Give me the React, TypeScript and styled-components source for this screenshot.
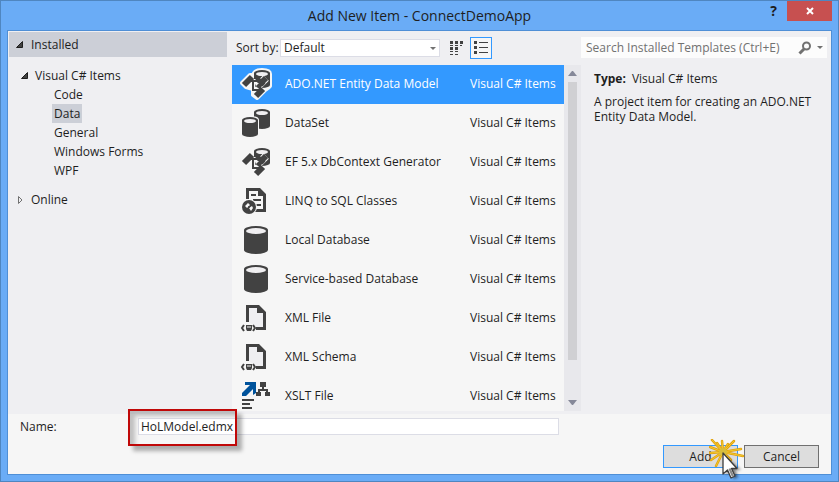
import React, { useState } from "react";
import styled, { createGlobalStyle, css } from "styled-components";

const GlobalStyle = createGlobalStyle`
  * { box-sizing: border-box; }
  body { margin: 0; }
  body, button, input, select {
    font-family: "Open Sans", "Noto Sans", sans-serif;
    font-size: 12px;
    line-height: 16px;
    color: #1e1e1e;
  }
  button { cursor: default; }
  svg { display: block; flex: none; }
`;

const Window = styled.div`
  display: flex;
  flex-direction: column;
  height: 100vh;
  min-height: 400px;
  padding: 0 6px 6px;
  background: #6aacf6;
  border: 1px solid #4f86c0;
`;

const TitleBar = styled.header`
  display: grid;
  grid-template-columns: 72px 1fr 72px;
  flex: none;
  height: 29px;
`;

const Title = styled.h1`
  grid-column: 2;
  margin: 0;
  font-size: 14px;
  font-weight: 400;
  line-height: 29px;
  text-align: center;
  white-space: nowrap;
`;

const WindowButtons = styled.div`
  display: flex;
  justify-content: flex-end;
  align-items: flex-start;
`;

const HelpButton = styled.button`
  width: 27px;
  height: 20px;
  padding: 0;
  border: 0;
  background: none;
  font-size: 14px;
  font-weight: 700;
`;

const CloseButton = styled.button`
  display: grid;
  place-items: center;
  width: 45px;
  height: 20px;
  padding: 0;
  border: 0;
  background: #c75050;
`;

const Client = styled.div`
  display: flex;
  flex: 1;
  flex-direction: column;
  min-height: 0;
  border: 1px solid #4f8fd6;
  background: #efeff2;
`;

const Body = styled.main`
  display: grid;
  grid-template-columns: 218px minmax(0, 1fr) 246px;
  flex: 1;
  min-height: 0;
  padding: 1px 4px 3px 1px;
`;

const Sidebar = styled.nav`
  display: flex;
  flex-direction: column;
  align-items: flex-start;
`;

const GroupButton = styled.button<{ $active?: boolean }>`
  display: flex;
  align-items: center;
  gap: 7px;
  width: 100%;
  height: 25px;
  padding: 0 7px;
  border: 0;
  background: ${(p) => (p.$active ? "#cccfd7" : "transparent")};
`;

const Tree = styled.div`
  display: flex;
  flex-direction: column;
  align-items: flex-start;
  padding: 9px 0 7px 12px;
`;

const BranchButton = styled.button`
  display: flex;
  align-items: center;
  gap: 6px;
  height: 19px;
  padding: 0;
  border: 0;
  background: none;
`;

const Leaves = styled.div`
  display: flex;
  flex-direction: column;
  align-items: flex-start;
  padding-left: 31px;
`;

const LeafButton = styled.button<{ $selected: boolean }>`
  height: 19px;
  padding: 0 2px;
  border: 0;
  background: ${(p) => (p.$selected ? "#cccfd7" : "transparent")};
`;

const Center = styled.section`
  display: flex;
  flex-direction: column;
  min-width: 0;
  min-height: 0;
  padding-left: 5px;
`;

const Toolbar = styled.div`
  display: flex;
  flex: none;
  align-items: center;
  height: 33px;
  padding: 0 0 1px 4px;
`;

const SortLabel = styled.label`
  flex: none;
  width: 44px;
  white-space: nowrap;
`;

const SelectBox = styled.div`
  display: grid;
  flex: none;
  align-items: center;
  width: 160px;
  height: 18px;
  border: 1px solid #dcdde6;
  background: #fff;

  & > * { grid-area: 1 / 1; }
  & > svg { justify-self: end; margin-right: 3px; pointer-events: none; }
`;

const SortSelect = styled.select`
  appearance: none;
  width: 100%;
  height: 16px;
  padding: 0 16px 0 3px;
  border: 0;
  background: none;
`;

const ViewButton = styled.button<{ $active?: boolean }>`
  display: grid;
  place-items: center;
  width: 22px;
  height: 22px;
  padding: 0;
  border: 1px solid ${(p) => (p.$active ? "#3399ff" : "transparent")};
  background: ${(p) => (p.$active ? "#f6f6f6" : "transparent")};
`;

const ViewButtons = styled.div`
  display: flex;
  gap: 3px;
  margin-left: 5px;
`;

const ListArea = styled.div`
  display: flex;
  flex: 1;
  min-height: 0;
`;

const TemplateList = styled.div`
  flex: 1;
  min-width: 0;
  overflow: hidden;
  background: #f6f6f6;
`;

const TemplateRow = styled.button<{ $selected: boolean }>`
  display: grid;
  grid-template-columns: 32px 1fr 81px;
  column-gap: 13px;
  align-items: center;
  width: 100%;
  height: 39px;
  padding: 0 13px 1px 8px;
  border: 0;
  background: none;
  text-align: left;
  white-space: nowrap;
  ${(p) =>
    p.$selected &&
    css`
      background: #3399ff;
      color: #fff;
    `}
`;

const ScrollBar = styled.div`
  display: flex;
  flex: none;
  flex-direction: column;
  align-items: center;
  width: 17px;
  background: #e8e8ec;
`;

const ScrollButton = styled.button`
  display: grid;
  place-items: center;
  width: 17px;
  height: 17px;
  padding: 0;
  border: 0;
  background: none;
`;

const ScrollTrack = styled.div`
  flex: 1;
  width: 9px;
`;

const ScrollThumb = styled.div`
  height: 89%;
  background: #d0d0d3;
`;

const Details = styled.aside`
  min-width: 0;
`;

const SearchBox = styled.div`
  display: flex;
  align-items: center;
  height: 21px;
  margin-top: 5px;
  background: #fcfcfc;
`;

const SearchInput = styled.input`
  flex: 1;
  min-width: 0;
  height: 21px;
  padding: 0 5px;
  border: 0;
  outline: 0;
  background: none;
  &::placeholder { color: #717171; opacity: 1; }
`;

const SearchButton = styled.button<{ $narrow?: boolean }>`
  display: grid;
  place-items: center;
  width: ${(p) => (p.$narrow ? "14px" : "16px")};
  height: 21px;
  padding: 0;
  border: 0;
  background: none;
`;

const Info = styled.div`
  display: flex;
  flex-direction: column;
  gap: 8px;
  padding: 13px 8px 0 13px;
`;

const InfoText = styled.p`
  margin: 0;
  line-height: 15px;
`;

const InfoLabel = styled.strong`
  margin-right: 6px;
`;

const Footer = styled.footer`
  display: flex;
  flex: none;
  flex-direction: column;
  justify-content: space-between;
  height: 60px;
  padding: 4px 12px 6px;
  background: #f6f6f6;
`;

const NameRow = styled.div`
  display: flex;
  align-items: center;
`;

const NameLabel = styled.label`
  width: 118px;
`;

const NameField = styled.div`
  position: relative;
  flex: 0 1 421px;
`;

const NameInput = styled.input`
  display: block;
  width: 100%;
  height: 17px;
  padding: 0 2px;
  border: 1px solid #dcdde6;
  outline: 0;
  background: #fff;
`;

const Callout = styled.div`
  position: absolute;
  top: -9px;
  left: -10px;
  width: 109px;
  height: 37px;
  border: 2px solid #c00808;
  box-shadow: 5px 5px 4px rgba(0, 0, 0, 0.3), inset 5px 5px 4px rgba(0, 0, 0, 0.22);
  pointer-events: none;
`;

const Actions = styled.div`
  display: flex;
  justify-content: flex-end;
  gap: 6px;
`;

const ActionSlot = styled.div`
  position: relative;
`;

const ActionButton = styled.button<{ $primary?: boolean }>`
  display: block;
  width: 75px;
  height: 23px;
  padding: 0;
  border: 1px solid ${(p) => (p.$primary ? "#3399ff" : "#707070")};
  background: #dddddd;
`;

const Pointer = styled.svg`
  position: absolute;
  top: -6px;
  left: 46px;
  pointer-events: none;
`;

const INK = "#424242";

function Cylinder({ x, y, w, h }: { x: number; y: number; w: number; h: number }) {
  const r = w / 2;
  const ry = w > 20 ? 4 : 3;
  return (
    <g>
      <path
        d={`M${x} ${y + ry}A${r} ${ry} 0 0 1 ${x + w} ${y + ry}V${y + h - ry}A${r} ${ry} 0 0 1 ${x} ${y + h - ry}Z`}
        fill={INK}
      />
      <ellipse cx={x + r} cy={y + ry + 1} rx={r - 2} ry={ry - 1} fill="#f0eff1" />
    </g>
  );
}

function ModelIcon({ halo }: { halo?: boolean }) {
  const blocks = "M4 17L12 9M17 19L26 10M16 28L23 21";
  const links = "M10 13H20M13 13V22H21";
  return (
    <svg width="32" height="32" viewBox="0 0 32 32">
      {halo && (
        <path
          d="M10 7H14V5Q16 2 22 2Q30 2 30 6V18L28 20L24 23L17 30L13 27V21L6 19L2 15Z"
          fill="#f6f6f6"
          stroke="#f6f6f6"
          strokeWidth="4"
          strokeLinejoin="round"
        />
      )}
      <Cylinder x={14} y={2} w={16} h={18} />
      <path d={blocks} stroke="#f6f6f6" strokeWidth="8" />
      <path d={links} fill="none" stroke="#f6f6f6" strokeWidth="4" />
      <path d={blocks} stroke={INK} strokeWidth="6" />
      <path d="M16 9L24 17" stroke={INK} strokeWidth="4" />
      <path d={links} fill="none" stroke={INK} strokeWidth="2" />
      <path d="M15 15H19L16 18" fill="#f6f6f6" />
    </svg>
  );
}

function DataSetIcon() {
  return (
    <svg width="32" height="32" viewBox="0 0 32 32">
      <Cylinder x={14} y={2} w={16} h={20} />
      <path d="M1 13Q1 9 10 9Q19 9 19 13V31H1Z" fill="#f6f6f6" />
      <Cylinder x={2} y={10} w={16} h={20} />
    </svg>
  );
}

function DatabaseIcon() {
  return (
    <svg width="32" height="32" viewBox="0 0 32 32">
      <Cylinder x={4} y={2} w={24} h={28} />
    </svg>
  );
}

function LinqIcon() {
  return (
    <svg width="32" height="32" viewBox="0 0 32 32">
      <path d="M6 3H20L26 9V27H15V24H23V11H18V6H9V14H6Z" fill={INK} />
      <path d="M11 10H16M13 15H21M16 20H21" stroke={INK} strokeWidth="2" />
      <circle cx="9" cy="22" r="8" fill="#f6f6f6" />
      <circle cx="9" cy="22" r="7" fill={INK} />
      <path d="M5 21L8 18L10 20L7 23ZM9 23L12 21L13 23L11 26Z" fill="#f6f6f6" />
      <circle cx="9" cy="22" r="1" fill={INK} />
    </svg>
  );
}

function XmlIcon() {
  return (
    <svg width="32" height="32" viewBox="0 0 32 32">
      <path d="M6 3H19L26 10V28H16V25H23V11H17V6H9V20H6Z" fill={INK} />
      <path d="M9 6H17V11H23V25H16L9 20Z" fill="#efeff2" />
      <path d="M4 23L2 26L4 29M13 23L15 26L13 29" fill="none" stroke={INK} strokeWidth="2" />
      <path d="M6 23H12V27L11 29H7L6 27Z" fill={INK} />
      <path d="M7 25H11" stroke="#f6f6f6" strokeWidth="1" />
    </svg>
  );
}

function XsltIcon() {
  return (
    <svg width="32" height="32" viewBox="0 0 32 32">
      <path d="M5 2H16V13L13 15V9L6 16H2V13L10 5H5Z" fill="#00539c" />
      <path d="M20 2H26V7H24V9H28V12H30V16H25V12H26V11H20V12H21V16H16V12H18V9H22V7H20Z" fill={INK} />
      <path d="M2 20H14M2 24H10M2 28H12" stroke={INK} strokeWidth="2" />
    </svg>
  );
}

function Arrow({ color, up }: { color: string; up?: boolean }) {
  return (
    <svg width="9" height="5" viewBox="0 0 9 5">
      <path d={up ? "M0 5H9L5 0H4Z" : "M0 0H9L5 5H4Z"} fill={color} />
    </svg>
  );
}

function DropArrow() {
  return (
    <svg width="6" height="3" viewBox="0 0 6 3">
      <path d="M0 0H6L3 3Z" fill="#717171" />
    </svg>
  );
}

function Expander({ open }: { open?: boolean }) {
  return (
    <svg width="8" height="10" viewBox="0 0 8 10">
      {open ? (
        <path d="M6.5 1.5V7.5H0.5Z" fill={INK} stroke="#1e1e1e" />
      ) : (
        <path d="M2.5 1.5V8.5L6 5Z" fill="none" stroke="#717171" />
      )}
    </svg>
  );
}

const templates = [
  { name: "ADO.NET Entity Data Model", icon: <ModelIcon halo /> },
  { name: "DataSet", icon: <DataSetIcon /> },
  { name: "EF 5.x DbContext Generator", icon: <ModelIcon /> },
  { name: "LINQ to SQL Classes", icon: <LinqIcon /> },
  { name: "Local Database", icon: <DatabaseIcon /> },
  { name: "Service-based Database", icon: <DatabaseIcon /> },
  { name: "XML File", icon: <XmlIcon /> },
  { name: "XML Schema", icon: <XmlIcon /> },
  { name: "XSLT File", icon: <XsltIcon /> },
];

const categories = ["Code", "Data", "General", "Windows Forms", "WPF"];

const rays = [
  "M0 0L-11 -12", "M0 0L-1 -11", "M0 0L11 -11", "M0 0L18 -3", "M0 0L20 4",
  "M0 0L8 8", "M0 0L-7 14", "M0 0L-12 8", "M0 0L-13 1", "M0 0L-13 -5", "M0 0L5 -8", "M0 0L-6 -9",
];

function ClickPointer() {
  return (
    <Pointer width="38" height="42" viewBox="0 0 38 42" aria-hidden="true">
      <defs>
        <filter id="soft" x="-50%" y="-50%" width="200%" height="200%">
          <feGaussianBlur stdDeviation="1.5" />
        </filter>
      </defs>
      <g transform="translate(14 13)" strokeLinecap="round">
        {rays.map((d) => (
          <path key={d} d={d} stroke="#e0a010" strokeWidth="2.5" />
        ))}
        {rays.map((d) => (
          <path key={d} d={d} stroke="#f3cb2c" strokeWidth="1" />
        ))}
        <circle r="4" fill="#d8bd3c" />
      </g>
      <path
        d="M17 18V36L21 32L25 40L29 38L26 31H32Z"
        fill="#000"
        opacity="0.5"
        filter="url(#soft)"
      />
      <path
        d="M14 14V35L18.5 31L22 39L26 37L22.5 29.5H28Z"
        fill="#fff"
        stroke="#3c3c3c"
        strokeWidth="1.3"
        strokeLinejoin="round"
      />
      <path d="M19.5 30L23 38L25 37L21.5 29Z" fill="#888" />
    </Pointer>
  );
}

export default function App() {
  const [category, setCategory] = useState("Data");
  const [selected, setSelected] = useState(0);
  const [name, setName] = useState("HoLModel.edmx");

  return (
    <>
      <GlobalStyle />
      <Window>
        <TitleBar>
          <Title>Add New Item - ConnectDemoApp</Title>
          <WindowButtons>
            <HelpButton aria-label="Help">?</HelpButton>
            <CloseButton aria-label="Close">
              <svg width="8" height="8" viewBox="0 0 8 8">
                <path d="M1 1L7 7M7 1L1 7" stroke="#fff" strokeWidth="2" />
              </svg>
            </CloseButton>
          </WindowButtons>
        </TitleBar>
        <Client>
          <Body>
            <Sidebar aria-label="Template categories">
              <GroupButton $active>
                <Expander open />
                Installed
              </GroupButton>
              <Tree>
                <BranchButton>
                  <Expander open />
                  Visual C# Items
                </BranchButton>
                <Leaves>
                  {categories.map((c) => (
                    <LeafButton key={c} $selected={c === category} onClick={() => setCategory(c)}>
                      {c}
                    </LeafButton>
                  ))}
                </Leaves>
              </Tree>
              <GroupButton>
                <Expander />
                Online
              </GroupButton>
            </Sidebar>
            <Center>
              <Toolbar>
                <SortLabel htmlFor="sort">Sort by:</SortLabel>
                <SelectBox>
                  <SortSelect id="sort" defaultValue="Default">
                    <option>Default</option>
                  </SortSelect>
                  <DropArrow />
                </SelectBox>
                <ViewButtons>
                  <ViewButton aria-label="Small icons">
                    <svg width="14" height="14" viewBox="0 0 14 14">
                      <path
                        d="M1 0H4V3H1ZM6 0H9V3H6ZM11 0H14V3H11ZM1 6H4V9H1ZM6 6H9V9H6ZM1 4H4V5H1ZM6 4H9V5H6ZM11 4H13V5H11ZM1 10H4V11H1ZM6 10H9V11H6ZM1 13H4V14H1ZM6 13H9V14H6Z"
                        fill={INK}
                      />
                    </svg>
                  </ViewButton>
                  <ViewButton aria-label="Medium icons" $active>
                    <svg width="14" height="14" viewBox="0 0 14 14">
                      <path
                        d="M0 0H3V3H0ZM0 5H3V8H0ZM0 10H3V13H0ZM5 1H14V2H5ZM5 6H14V7H5ZM5 11H14V12H5Z"
                        fill={INK}
                      />
                    </svg>
                  </ViewButton>
                </ViewButtons>
              </Toolbar>
              <ListArea>
                <TemplateList>
                  {templates.map((t, i) => (
                    <TemplateRow key={t.name} $selected={i === selected} onClick={() => setSelected(i)}>
                      {t.icon}
                      <span>{t.name}</span>
                      <span>Visual C# Items</span>
                    </TemplateRow>
                  ))}
                </TemplateList>
                <ScrollBar>
                  <ScrollButton aria-label="Scroll up">
                    <Arrow color="#868999" up />
                  </ScrollButton>
                  <ScrollTrack>
                    <ScrollThumb />
                  </ScrollTrack>
                  <ScrollButton aria-label="Scroll down">
                    <Arrow color="#868999" />
                  </ScrollButton>
                </ScrollBar>
              </ListArea>
            </Center>
            <Details>
              <SearchBox>
                <SearchInput
                  aria-label="Search Installed Templates"
                  placeholder="Search Installed Templates (Ctrl+E)"
                />
                <SearchButton aria-label="Search">
                  <svg width="14" height="14" viewBox="0 0 14 14">
                    <circle cx="8.5" cy="5" r="3.5" fill="none" stroke="#717171" strokeWidth="2" />
                    <path d="M6 8L1.5 12.5" stroke="#717171" strokeWidth="3" />
                  </svg>
                </SearchButton>
                <SearchButton aria-label="Search options" $narrow>
                  <DropArrow />
                </SearchButton>
              </SearchBox>
              <Info>
                <InfoText>
                  <InfoLabel>Type:</InfoLabel>Visual C# Items
                </InfoText>
                <InfoText>A project item for creating an ADO.NET Entity Data Model.</InfoText>
              </Info>
            </Details>
          </Body>
          <Footer>
            <NameRow>
              <NameLabel htmlFor="name">Name:</NameLabel>
              <NameField>
                <NameInput id="name" value={name} onChange={(e) => setName(e.target.value)} />
                <Callout />
              </NameField>
            </NameRow>
            <Actions>
              <ActionSlot>
                <ActionButton $primary>Add</ActionButton>
                <ClickPointer />
              </ActionSlot>
              <ActionButton>Cancel</ActionButton>
            </Actions>
          </Footer>
        </Client>
      </Window>
    </>
  );
}
